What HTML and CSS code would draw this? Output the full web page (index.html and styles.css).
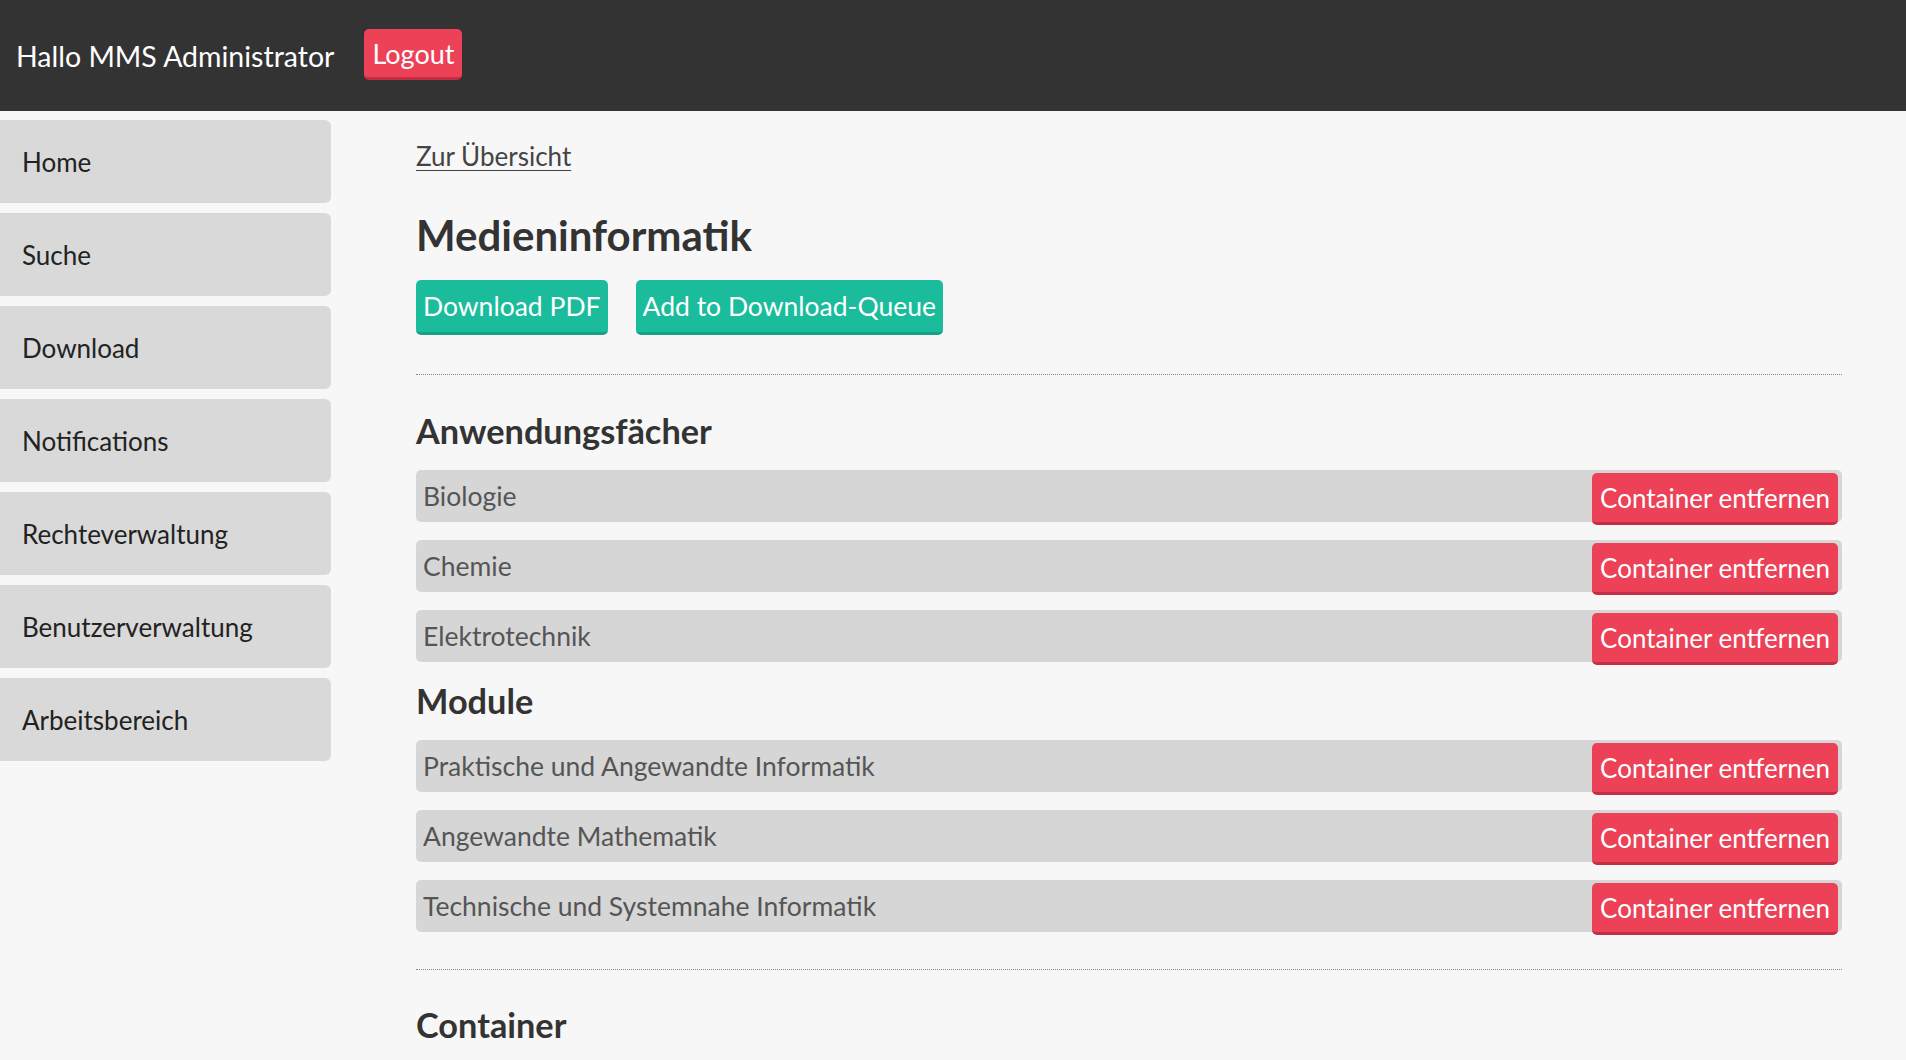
FILE: index.html
```html
<!DOCTYPE html>
<html lang="de">
<head>
<meta charset="utf-8">
<title>Medieninformatik</title>
<link rel="stylesheet" href="styles.css">
</head>
<body>
<header class="topbar">
  <span class="greeting">Hallo MMS Administrator</span>
  <a class="btn btn-red logout" href="#">Logout</a>
</header>
<div class="layout">
  <nav class="sidebar">
    <a class="nav-item" href="#">Home</a>
    <a class="nav-item" href="#">Suche</a>
    <a class="nav-item" href="#">Download</a>
    <a class="nav-item" href="#">Notifications</a>
    <a class="nav-item" href="#">Rechteverwaltung</a>
    <a class="nav-item" href="#">Benutzerverwaltung</a>
    <a class="nav-item" href="#">Arbeitsbereich</a>
  </nav>
  <main class="content">
    <a class="back-link" href="#">Zur Übersicht</a>
    <h1 class="title">Medieninformatik</h1>
    <div class="actions">
      <a class="btn btn-green" href="#">Download PDF</a>
      <a class="btn btn-green" href="#">Add to Download-Queue</a>
    </div>
    <hr class="sep">
    <h2 class="section-title">Anwendungsfächer</h2>
    <ul class="list">
      <li class="row"><span class="row-name">Biologie</span><a class="btn btn-red row-btn" href="#">Container entfernen</a></li>
      <li class="row"><span class="row-name">Chemie</span><a class="btn btn-red row-btn" href="#">Container entfernen</a></li>
      <li class="row"><span class="row-name">Elektrotechnik</span><a class="btn btn-red row-btn" href="#">Container entfernen</a></li>
    </ul>
    <h2 class="section-title section-tight">Module</h2>
    <ul class="list">
      <li class="row"><span class="row-name">Praktische und Angewandte Informatik</span><a class="btn btn-red row-btn" href="#">Container entfernen</a></li>
      <li class="row"><span class="row-name">Angewandte Mathematik</span><a class="btn btn-red row-btn" href="#">Container entfernen</a></li>
      <li class="row"><span class="row-name">Technische und Systemnahe Informatik</span><a class="btn btn-red row-btn" href="#">Container entfernen</a></li>
    </ul>
    <hr class="sep sep-bottom">
    <h2 class="section-title section-last">Container</h2>
  </main>
</div>
</body>
</html>
```
FILE: styles.css
```css
* { box-sizing: border-box; }
html, body { margin: 0; padding: 0; }
body {
  background: #f7f7f7;
  font-family: Lato, "Noto Sans", sans-serif;
  color: #333;
  overflow: hidden;
  height: 1060px;
}
a { text-decoration: none; }

.topbar {
  height: 111px;
  background: #333333;
  display: flex;
  align-items: center;
  padding-left: 16px;
  gap: 30px;
}
.greeting {
  color: #ffffff;
  font-size: 28.5px;
}

.btn {
  display: inline-flex;
  align-items: center;
  border-radius: 5px;
  color: #ffffff;
  white-space: nowrap;
}
.btn-red {
  background: #ec4157;
  border-bottom: 3px solid #c22f45;
}
.btn-green {
  background: #1abc9c;
  border-bottom: 3px solid #16a085;
  height: 55px;
  padding: 0 7px;
  font-size: 26.5px;
}
.logout {
  height: 51px;
  padding: 0 8px;
  font-size: 27px;
  margin-top: -2px;
}

.layout {
  display: flex;
  align-items: flex-start;
  padding-top: 9px;
}
.sidebar {
  width: 331px;
  flex: none;
  display: flex;
  flex-direction: column;
  gap: 10px;
}
.nav-item {
  height: 83px;
  background: #d9d9d9;
  border-radius: 0 6px 6px 0;
  display: flex;
  align-items: center;
  padding-left: 22px;
  font-size: 26px;
  color: #222;
}

.content {
  flex: 1;
  padding: 21px 64px 0 85px;
  display: flex;
  flex-direction: column;
  align-items: flex-start;
}
.back-link {
  color: #444;
  font-size: 26px;
  text-decoration: underline;
  text-underline-offset: 4px;
  text-decoration-thickness: 1px;
  line-height: 30px;
}
.title {
  margin: 41px 0 0;
  font-size: 42px;
  font-weight: bold;
  line-height: 46px;
  color: #333;
}
.actions {
  display: flex;
  gap: 28px;
  margin-top: 22px;
}
.sep {
  align-self: stretch;
  border: 0;
  border-top: 1px dotted #888;
  margin: 39px 0 0;
  height: 0;
}
.section-title {
  margin: 36px 0 0;
  font-size: 34.3px;
  font-weight: bold;
  line-height: 40px;
  color: #333;
}
.section-tight { margin-top: 19px; }
.section-last { margin-top: 35px; }
.list {
  list-style: none;
  margin: 19px 0 0;
  padding: 0;
  align-self: stretch;
  display: flex;
  flex-direction: column;
  gap: 18px;
}
.row {
  height: 52px;
  background: #d6d6d6;
  border-radius: 5px;
  display: flex;
  align-items: flex-start;
  justify-content: space-between;
  padding: 0 4px 0 7px;
}
.row-name {
  font-size: 26.5px;
  color: #555;
  line-height: 52px;
}
.row-btn {
  margin-top: 3px;
  height: 52px;
  padding: 0 8px;
  font-size: 26px;
  flex: none;
}
.sep-bottom { margin-top: 37px; }
```
